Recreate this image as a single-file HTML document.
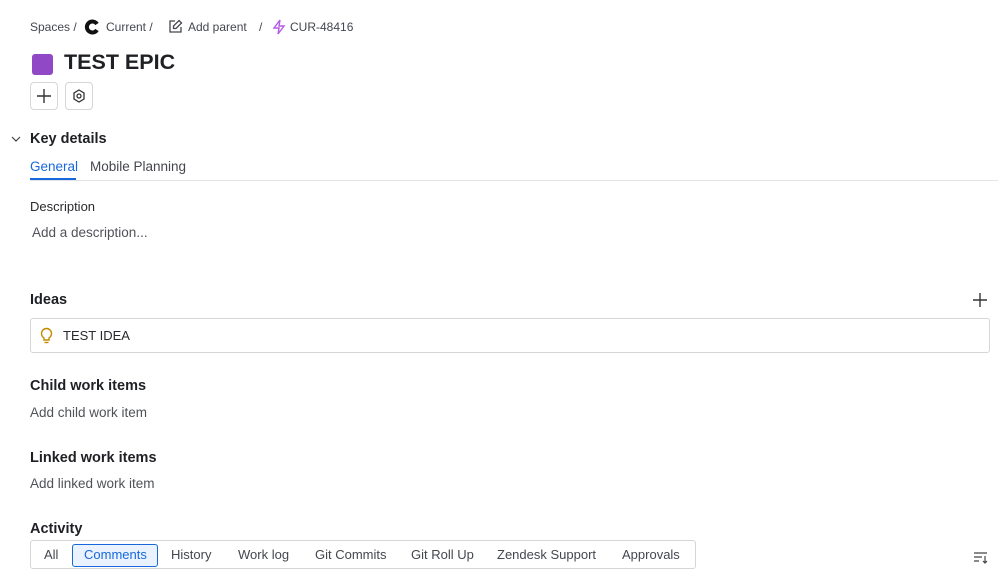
<!DOCTYPE html>
<html><head><style>
*{box-sizing:border-box;margin:0;padding:0}
body{width:998px;height:581px;overflow:hidden;background:#fff;font-family:"Liberation Sans",sans-serif;color:#292a2e;position:relative}
.a{position:absolute;white-space:nowrap}
.bc{font-size:12px;color:#44474e;top:20px}
h2{font-size:14.5px;font-weight:bold;color:#1f2024}
.muted{color:#505258;font-size:13.5px}
.btn{position:absolute;width:28px;height:28px;border:1px solid #d4d6da;border-radius:4px;top:82px}
.tab{position:absolute;top:544px;height:22px;font-size:13px;color:#44474e;line-height:22px}
</style></head><body>
<div class="a bc" style="left:30px">Spaces /</div>
<svg class="a" style="left:84px;top:19px" width="16" height="16" viewBox="0 0 16 16"><path d="M13 5A5.5 5.5 0 1 0 13 11" stroke="#111" stroke-width="4" fill="none"/></svg>
<div class="a bc" style="left:106px">Current /</div>
<svg class="a" style="left:168px;top:19px" width="15" height="15" viewBox="0 0 15 15" fill="none" stroke="#44474e" stroke-width="1.3"><path d="M7 2H2v11h11V8"/><path d="M11 1.5l2.5 2.5L8 9.5H5.5V7z"/></svg>
<div class="a bc" style="left:188px">Add parent</div>
<div class="a bc" style="left:259px">/</div>
<svg class="a" style="left:272px;top:19px" width="14" height="16" viewBox="0 0 14 16" fill="none" stroke="#b45ae6" stroke-width="1.4"><path d="M8 1L2 9h5l-1 6 6-8H7z"/></svg>
<div class="a bc" style="left:290px">CUR-48416</div>
<div class="a" style="left:32px;top:54px;width:21px;height:21px;background:#9048c6;border-radius:3px"></div>
<div class="a" style="left:64px;top:50px;font-size:21.5px;font-weight:bold;color:#1f2024">TEST EPIC</div>
<div class="btn" style="left:30px"><svg width="26" height="26" viewBox="0 0 26 26" stroke="#333" stroke-width="1.4"><path d="M13 6v14M6 13h14"/></svg></div>
<div class="btn" style="left:65px"><svg width="26" height="26" viewBox="0 0 26 26" fill="none" stroke="#333" stroke-width="1.3"><path d="M13 7l5 3v6l-5 3-5-3v-6z"/><circle cx="13" cy="13" r="2"/></svg></div>
<svg class="a" style="left:11px;top:135px" width="10" height="8" viewBox="0 0 10 8" fill="none" stroke="#444" stroke-width="1.2"><path d="M1 2l4 4 4-4"/></svg>
<h2 class="a" style="left:30px;top:131px">Key details</h2>
<div class="a" style="left:30px;top:159px;font-size:13.5px;color:#1868db">General</div>
<div class="a" style="left:30px;top:178px;width:46px;height:2px;background:#1868db"></div>
<div class="a" style="left:90px;top:159px;font-size:13.5px;color:#44474e">Mobile Planning</div>
<div class="a" style="left:30px;top:180px;width:968px;height:1px;background:#e3e4e7"></div>
<div class="a" style="left:30px;top:199px;font-size:13px;color:#292a2e">Description</div>
<div class="a muted" style="left:32px;top:225px">Add a description...</div>
<h2 class="a" style="left:30px;top:292px">Ideas</h2>
<svg class="a" style="left:973px;top:293px" width="14" height="14" stroke="#333" stroke-width="1.4"><path d="M7 0v14M0 7h14"/></svg>
<div class="a" style="left:30px;top:318px;width:960px;height:35px;border:1px solid #d4d6da;border-radius:3px"></div>
<svg class="a" style="left:40px;top:327px" width="13" height="17" viewBox="0 0 13 17" fill="none" stroke="#c48a00" stroke-width="1.4"><path d="M4 11C2 9.5 1.5 8 1.5 6.5a5 5 0 0 1 10 0c0 1.5-.5 3-2.5 4.5v2H4z"/><path d="M4.5 15.5h4"/></svg>
<div class="a" style="left:63px;top:328px;font-size:13px">TEST IDEA</div>
<h2 class="a" style="left:30px;top:378px">Child work items</h2>
<div class="a muted" style="left:30px;top:405px">Add child work item</div>
<h2 class="a" style="left:30px;top:450px">Linked work items</h2>
<div class="a muted" style="left:30px;top:476px">Add linked work item</div>
<h2 class="a" style="left:30px;top:521px">Activity</h2>
<div class="a" style="left:30px;top:540px;width:666px;height:29px;border:1px solid #d4d6da;border-radius:3px"></div>
<div class="a" style="left:72px;top:544px;width:86px;height:23px;background:#e9f2fe;border:1px solid #1868db;border-radius:3px"></div>
<div class="tab" style="left:44px">All</div>
<div class="tab" style="left:84px;color:#1868db">Comments</div>
<div class="tab" style="left:171px">History</div>
<div class="tab" style="left:238px">Work log</div>
<div class="tab" style="left:315px">Git Commits</div>
<div class="tab" style="left:411px">Git Roll Up</div>
<div class="tab" style="left:497px">Zendesk Support</div>
<div class="tab" style="left:622px">Approvals</div>
<svg class="a" style="left:974px;top:552px" width="14" height="12" fill="none" stroke="#444" stroke-width="1.2"><path d="M0 1h13M0 5h8M0 9h5M11 4v7M9 9l2 2 2-2"/></svg>
</body></html>
